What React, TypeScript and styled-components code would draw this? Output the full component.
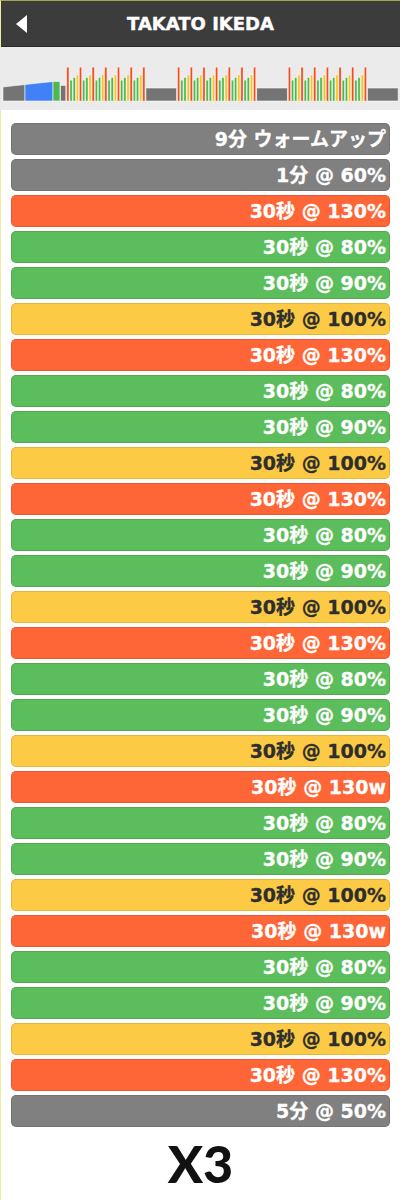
import { styled, createGlobalStyle } from "styled-components";

const GlobalStyle = createGlobalStyle`
  body {
    margin: 0;
    background: #ffffff;
    font-family: "DejaVu Sans", "Noto Sans CJK JP", sans-serif;
  }
`;

type Zone = "grey" | "red" | "green" | "yellow";

const ROW_COLORS: Record<Zone, { bg: string; fg: string }> = {
  grey: { bg: "#808080", fg: "#ffffff" },
  red: { bg: "#fe6637", fg: "#ffffff" },
  green: { bg: "#5cbd5c", fg: "#ffffff" },
  yellow: { bg: "#fcca45", fg: "#2e2e2e" },
};

const BAR_COLORS: Record<Zone, string> = {
  grey: "#747474",
  red: "#f64b1f",
  green: "#4db84d",
  yellow: "#ffc21c",
};

const zoneFor = (pct: number): Zone =>
  pct >= 120 ? "red" : pct >= 95 ? "yellow" : pct >= 70 ? "green" : "grey";

const rows: { label: string; zone: Zone }[] = [
  { label: "9分 ウォームアップ", zone: "grey" },
  { label: "1分 @ 60%", zone: "grey" },
];
for (let i = 0; i < 7; i++) {
  const unit = i === 4 || i === 5 ? "w" : "%";
  rows.push({ label: `30秒 @ 130${unit}`, zone: "red" });
  if (i < 6) {
    rows.push({ label: "30秒 @ 80%", zone: "green" });
    rows.push({ label: "30秒 @ 90%", zone: "green" });
    rows.push({ label: "30秒 @ 100%", zone: "yellow" });
  }
}
rows.push({ label: "5分 @ 50%", zone: "grey" });

// chart geometry
const PX_PER_MIN = 6.33;
const BASE = 54;
const PX_PER_PCT = 0.26;
const h = (pct: number) => pct * PX_PER_PCT;

const setPcts: number[] = [];
for (let i = 0; i < 7; i++) {
  setPcts.push(130);
  if (i < 6) setPcts.push(80, 90, 100);
}

const Chart = () => {
  const parts: JSX.Element[] = [];
  let x = 3;
  // warm-up ramp
  const wEnd = x + 9 * PX_PER_MIN;
  const slope = (xx: number) => BASE - h(54 + ((xx - 3) / (53 - 3)) * 21);
  const segs: [number, number, string][] = [
    [3, 25, BAR_COLORS.grey],
    [25, 53, "#4181f7"],
  ];
  segs.forEach(([a, b, c]) =>
    parts.push(
      <polygon
        key={`w${a}`}
        points={`${a},${BASE} ${a},${slope(a)} ${b},${slope(b)} ${b},${BASE}`}
        fill={c}
        stroke="#fff"
        strokeOpacity={0.7}
        strokeWidth={0.8}
      />
    )
  );
  parts.push(
    <rect key="wg" x={53} y={slope(53)} width={wEnd - 53} height={BASE - slope(53)} fill={BAR_COLORS.green} stroke="#fff" strokeOpacity={0.7} strokeWidth={0.8} />
  );
  x = wEnd;
  parts.push(
    <rect key="m1" x={x + 0.5} y={BASE - h(60)} width={PX_PER_MIN - 1} height={h(60)} fill={BAR_COLORS.grey} stroke="#fff" strokeOpacity={0.7} strokeWidth={0.8} />
  );
  x += PX_PER_MIN;
  for (let s = 0; s < 3; s++) {
    setPcts.forEach((p, i) => {
      parts.push(
        <rect
          key={`s${s}b${i}`}
          x={x + 0.5}
          y={BASE - h(p)}
          width={PX_PER_MIN / 2 - 1}
          height={h(p)}
          fill={BAR_COLORS[zoneFor(p)]}
          stroke="#fff"
          strokeOpacity={0.6}
          strokeWidth={0.6}
        />
      );
      x += PX_PER_MIN / 2;
    });
    parts.push(
      <rect key={`r${s}`} x={x + 0.5} y={BASE - h(50)} width={5 * PX_PER_MIN - 1} height={h(50)} fill={BAR_COLORS.grey} stroke="#fff" strokeOpacity={0.7} strokeWidth={0.8} />
    );
    x += 5 * PX_PER_MIN;
  }
  return (
    <svg width="400" height="63" viewBox="0 0 400 63">
      {parts}
    </svg>
  );
};

const App = () => {
  return (
    <Page>
      <GlobalStyle />
      <Header>
        <BackButton aria-label="back">
          <svg width="12" height="18" viewBox="0 0 12 18">
            <polygon points="11,0 11,18 0,9" fill="#ffffff" />
          </svg>
        </BackButton>
        <Title>TAKATO IKEDA</Title>
        <span />
      </Header>
      <ChartArea>
        <Chart />
      </ChartArea>
      <List>
        {rows.map((r, i) => (
          <Row key={i} $zone={r.zone}>
            {r.label}
          </Row>
        ))}
      </List>
      <Repeat>X3</Repeat>
    </Page>
  );
};

const Page = styled.div`
  width: 399px;
  min-height: 1199px;
  border-left: 1px solid #eeeea0;
  border-top: 1px solid #a4a44c;
  background: #ffffff;
`;

const Header = styled.header`
  height: 45px;
  display: grid;
  grid-template-columns: 50px 1fr 50px;
  align-items: center;
  background: #3c3c3c;
  border-bottom: 1px solid #2c2c2c;
`;

const BackButton = styled.button`
  display: flex;
  align-items: center;
  justify-content: flex-start;
  padding: 0 0 0 15px;
  height: 100%;
  background: none;
  border: none;
  cursor: pointer;
`;

const Title = styled.h1`
  margin: 0;
  text-align: center;
  color: #ffffff;
  font-size: 18px;
  font-weight: 700;
  -webkit-text-stroke: 0.4px #ffffff;
`;

const ChartArea = styled.div`
  height: 63px;
  background: #ebebeb;
  display: flex;
  align-items: flex-start;
  margin-left: -1px;
`;

const List = styled.div`
  display: flex;
  flex-direction: column;
  gap: 4px;
  padding: 13px 10px 0 10px;
`;

const Row = styled.div<{ $zone: Zone }>`
  height: 30px;
  line-height: 31px;
  border-radius: 5px;
  border: 1px solid rgba(0, 0, 0, 0.1);
  background: ${(p) => ROW_COLORS[p.$zone].bg};
  color: ${(p) => ROW_COLORS[p.$zone].fg};
  -webkit-text-stroke: 0.3px ${(p) => ROW_COLORS[p.$zone].fg};
  text-align: right;
  padding-right: 3px;
  font-size: 19px;
  font-weight: 700;
  white-space: nowrap;
`;

const Repeat = styled.div`
  text-align: center;
  margin-top: 6px;
  font-family: Lato, sans-serif;
  font-size: 52px;
  font-weight: 900;
  color: #111111;
  line-height: 60px;
`;

export default App;
